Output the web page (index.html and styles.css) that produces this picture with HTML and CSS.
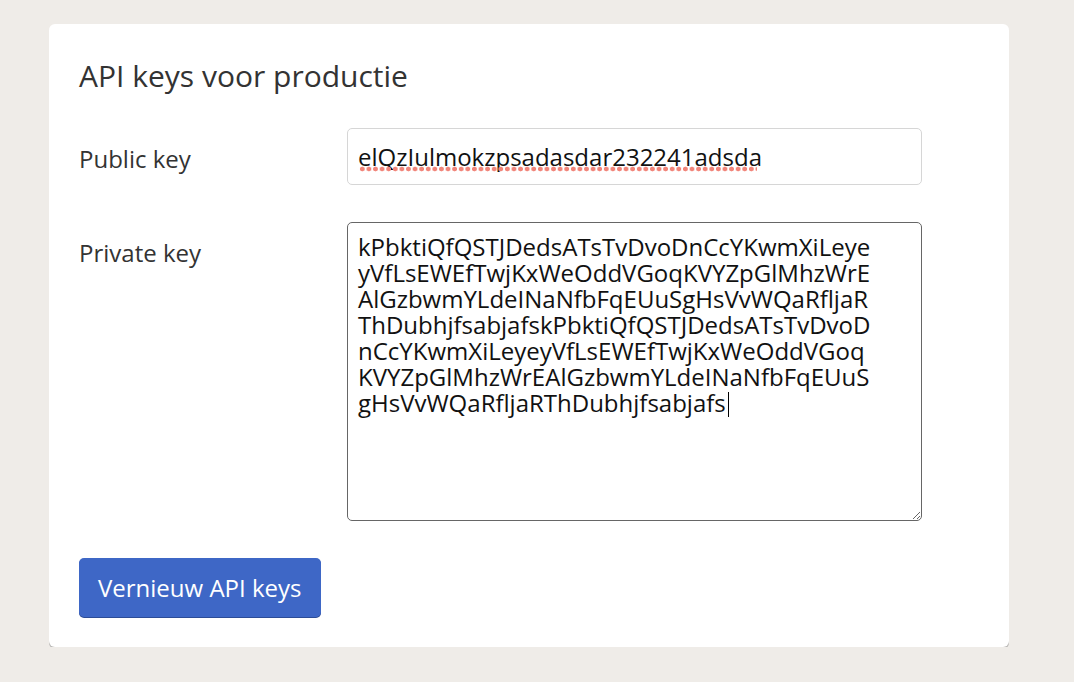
FILE: index.html
```html
<!DOCTYPE html>
<html lang="nl">
<head>
<meta charset="utf-8">
<title>API keys</title>
<link rel="stylesheet" href="styles.css">
</head>
<body>
<div class="card">
  <h2 class="title">API keys voor productie</h2>
  <div class="form">
    <label class="label label-public" for="pub">Public key</label>
    <div class="field-wrap">
      <input class="field" id="pub" type="text" value="elQzIulmokzpsadasdar232241adsda" spellcheck="false">
      <span class="squiggle" aria-hidden="true"></span>
    </div>
    <label class="label label-private" for="priv">Private key</label>
    <div class="area-wrap">
      <textarea class="area" id="priv" spellcheck="false">kPbktiQfQSTJDedsATsTvDvoDnCcYKwmXiLeye
yVfLsEWEfTwjKxWeOddVGoqKVYZpGlMhzWrE
AlGzbwmYLdeINaNfbFqEUuSgHsVvWQaRfljaR
ThDubhjfsabjafskPbktiQfQSTJDedsATsTvDvoD
nCcYKwmXiLeyeyVfLsEWEfTwjKxWeOddVGoq
KVYZpGlMhzWrEAlGzbwmYLdeINaNfbFqEUuS
gHsVvWQaRfljaRThDubhjfsabjafs</textarea>
      <span class="caret" aria-hidden="true"></span>
    </div>
  </div>
  <button class="btn" type="button">Vernieuw API keys</button>
</div>
</body>
</html>
```
FILE: styles.css
```css
* { box-sizing: border-box; }
body {
  margin: 0;
  background: #efece8;
  font-family: "Open Sans", "Noto Sans", sans-serif;
  color: #333;
}
.card {
  margin: 24px 0 0 49px;
  width: 960px;
  background: #fff;
  border-radius: 6px;
  box-shadow: 0 2px 0 #bbbab8;
  padding: 34px 30px 30px 30px;
}
.title {
  margin: 0;
  font-size: 30px;
  font-weight: 400;
  line-height: 36px;
  color: #333;
}
.form {
  display: grid;
  grid-template-columns: 268px 575px;
  row-gap: 37px;
  margin-top: 34px;
}
.label {
  font-size: 24px;
  color: #333;
}
.label-public { align-self: center; padding-top: 3px; }
.label-private { padding-top: 14px; }
.field-wrap {
  position: relative;
  display: flex;
}
.field {
  width: 100%;
  height: 57px;
  border: 1px solid #d6d6d6;
  border-radius: 5px;
  padding: 0 10px;
  font-family: "Open Sans", sans-serif;
  font-size: 24px;
  color: #111;
  outline: none;
}
.squiggle {
  position: absolute;
  left: 12px;
  top: 38px;
  width: 398px;
  height: 6px;
  background-image: radial-gradient(circle at center, #f1857a 0, #f1857a 2.1px, rgba(241,133,122,0) 2.7px);
  background-size: 6.6px 6px;
  background-repeat: repeat-x;
  pointer-events: none;
}
.area-wrap {
  position: relative;
  display: flex;
}
.area {
  width: 100%;
  height: 299px;
  border: 1px solid #666;
  border-radius: 5px;
  padding: 11px 4px 11px 10px;
  font-family: "Open Sans", sans-serif;
  font-size: 24px;
  line-height: 26px;
  color: #111;
  resize: both;
  outline: none;
  overflow: hidden;
}
.caret {
  position: absolute;
  left: 381px;
  top: 170px;
  width: 1px;
  height: 25px;
  background: #000;
  pointer-events: none;
}
.btn {
  margin-top: 37px;
  height: 59px;
  padding: 0 19px;
  background: #3e67c6;
  color: #fff;
  border: none;
  border-radius: 5px;
  box-shadow: 0 1px 0 #2c4c96;
  font-family: "Open Sans", sans-serif;
  font-size: 24px;
  cursor: pointer;
}
```
